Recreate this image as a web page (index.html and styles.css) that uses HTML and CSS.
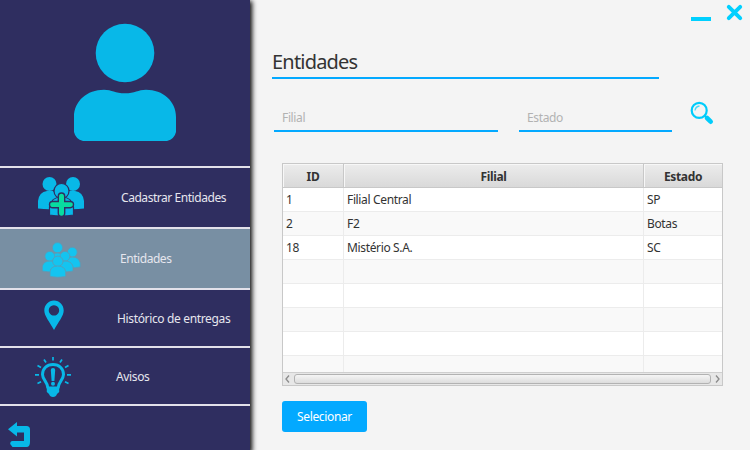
FILE: index.html
```html
<!DOCTYPE html>
<html lang="pt-BR">
<head>
<meta charset="utf-8">
<title>Entidades</title>
<link rel="stylesheet" href="styles.css">
</head>
<body>
<div class="window">
  <aside class="sidebar">
    <div class="profile">
      <svg width="104" height="120" viewBox="73 22 104 120" fill="#08b8e8"><circle cx="125" cy="53" r="29.3"/><path d="M74 117C74 101 87 89.700 104 89.700C112 89.700 115 93.300 125 93.300S138 89.700 146 89.700C163 89.700 176 101 176 117V132Q174.500 139 167 141H83Q75.500 139 74 132Z"/></svg>
    </div>
    <nav>
      <a class="item add">
        <svg width="48" height="42" viewBox="37 175 48 42" fill="#08b8e8"><circle cx="49.500" cy="184" r="7"/><circle cx="73" cy="184" r="7"/><path d="M38 208.500V201Q39 192 47 191H53L60 199V208Q52 210 38 208.500ZM84 208.500V201Q83 192 75 191H69L62 199V208Q70 210 84 208.500Z"/><g stroke="#2f2e60" stroke-width="1.200"><circle cx="61.500" cy="191" r="7.500"/><path d="M49.500 215V207Q51 197 61.500 197T73.500 207V215Q61.500 217 49.500 215Z"/><path fill="#08dca0" stroke-width="1.400" d="M58.300 201.500V196.500Q58.300 193 61.500 193T64.700 196.500V201.500H70Q73.500 201.500 73.500 204.500T70 207.800H64.700V213Q64.700 216.500 61.500 216.500T58.300 213V207.800H53Q49.500 207.800 49.500 204.500T53 201.500Z"/></g></svg>
        <span>Cadastrar Entidades</span>
      </a>
      <a class="item group active">
        <svg width="40" height="38" viewBox="41 241 40 38" fill="#14c4f0" stroke="#6298b0" stroke-width=".8"><circle cx="57.500" cy="247.700" r="5.100"/><path d="M50 266V259Q51 253 57.500 253T65.500 259V266Z"/><circle cx="72.300" cy="252.200" r="4.900"/><path d="M64.500 267V263Q66 257 72.300 257T80.300 263V267Q72 269 64.500 267Z"/><circle cx="49.800" cy="256.300" r="4.900"/><path d="M42.300 271V266Q44 261 50 261T57.500 266V271Q50 273 42.300 271Z"/><circle cx="65" cy="256.300" r="4.900"/><path d="M57.500 271V266Q59 261 65 261T73 266V271Q65 273 57.500 271Z"/><circle cx="57.800" cy="261.300" r="5.200"/><path d="M50 276.500V271.500Q51 266 57.800 266T65.700 271.500V276.500Q58 278 50 276.500Z"/></svg>
        <span>Entidades</span>
      </a>
      <a class="item history">
        <svg width="20" height="30" viewBox="44.500 299.500 20 30" fill="#08b8e8"><path fill-rule="evenodd" d="M54.500 300C49 300 44.800 304.500 44.800 310C44.800 315.500 50 321 54.500 329.500C59 321 64.200 315.500 64.200 310C64.200 304.500 60 300 54.500 300ZM54.500 304.700A5.200 5.200 0 1 1 54.400 304.700Z"/></svg>
        <span>Histórico de entregas</span>
      </a>
      <a class="item notices">
        <svg width="38" height="42" viewBox="34 356 38 42" fill="none" stroke="#08b8e8"><path stroke-width="3" d="M48 388.500C48 382 42.500 380 42.500 374.500C42.500 368.500 47 364.500 53 364.500S63.500 368.500 63.500 374.500C63.500 380 58 382 58 388.500"/><path fill="#08b8e8" stroke="none" d="M46.800 386.500H59.200V392Q58 393 57 394Q56 397 53 397T49 394Q48 393 46.800 392ZM50.800 370Q50.800 368 53 368T55.200 370L54.400 381H51.600Z"/><circle cx="53" cy="383.800" r="2" fill="#08b8e8" stroke="none"/><path stroke-width="1.700" d="M53 357V360.500M44 359.500L46 362.500M62 359.500L60 362.500M37.500 365.500L41 367.500M68.500 365.500L65 367.500M35 374.800H39M67 374.800H71M37.500 383.500L41 381.800M68.500 383.500L65 381.800"/></svg>
        <span>Avisos</span>
      </a>
    </nav>
    <div class="back">
      <svg width="24" height="26" viewBox="7 421 24 26" fill="#08b8e8"><path d="M8 429.200L17 422V426H26.500Q30 426 30 429.500V442Q30 447 26.500 447H12.500L10.200 444Q10.200 441 12.500 441H24V432.500H17V436.500Z"/></svg>
    </div>
  </aside>
  <main>
    <div class="controls">
      <svg width="56" height="18" viewBox="691 4 56 18"><path fill="#00d0ff" d="M691 17H711V21H691Z"/><path stroke="#00d0ff" stroke-width="3.900" stroke-linecap="round" d="M728.800 6.800L740.200 18.200M740.200 6.800L728.800 18.200"/></svg>
    </div>
    <h1>Entidades</h1>
    <form class="search">
      <div class="field branch">Filial</div>
      <div class="field state">Estado</div>
      <svg width="24" height="24" viewBox="690 101 24 24" fill="none"><circle cx="699.200" cy="110.400" r="7.500" stroke="#00ccfb" stroke-width="2.200"/><path stroke="#48daf8" stroke-width="1.300" d="M695 110.500Q695.500 106.500 699.500 106"/><path stroke="#00ccfb" stroke-width="2" d="M704.500 115.500L708 119"/><path stroke="#00ccfb" stroke-width="4.600" stroke-linecap="round" d="M707 118L710.700 121.700"/></svg>
    </form>
    <section class="table">
      <div class="row head"><b>ID</b><b>Filial</b><b>Estado</b></div>
      <div class="rows">
        <div class="row"><span>1</span><span>Filial Central</span><span>SP</span></div>
        <div class="row"><span>2</span><span>F2</span><span>Botas</span></div>
        <div class="row"><span>18</span><span>Mistério S.A.</span><span>SC</span></div>
        <div class="row"><span></span><span></span><span></span></div>
        <div class="row"><span></span><span></span><span></span></div>
        <div class="row"><span></span><span></span><span></span></div>
        <div class="row"><span></span><span></span><span></span></div>
        <div class="row"><span></span><span></span><span></span></div>
      </div>
      <div class="scrollbar">
        <svg width="5" height="8" viewBox="0 0 5 8"><path d="M4 .5L1 4L4 7.500" fill="none" stroke="#8b8b8b" stroke-width="1.300"/></svg>
        <div class="thumb"></div>
        <svg width="5" height="8" viewBox="0 0 5 8"><path d="M1 .5L4 4L1 7.500" fill="none" stroke="#8b8b8b" stroke-width="1.300"/></svg>
      </div>
    </section>
    <button type="button">Selecionar</button>
  </main>
</div>
</body>
</html>
```
FILE: styles.css
```css
* { box-sizing: border-box; }
body { margin: 0; font: 12px/16px "Noto Sans", sans-serif; letter-spacing: -.35px; color: #333; }
svg { display: block; flex: none; }
.window { display: flex; width: 750px; height: 450px; background: #f4f4f4; overflow: hidden; }
.sidebar { width: 250px; flex: none; background: #2f2e60; box-shadow: 1px 2px 5px 1px #000; }
.profile { height: 168px; padding: 22px 0 0 73px; border-bottom: 2px solid #e2e1ea; }
.item { display: flex; align-items: flex-start; height: 61px; border-bottom: 2px solid #e2e1ea; color: #e6e6ee; white-space: nowrap; }
.add { padding: 7px 0 0 37px; }
.add span { margin: 15px 0 0 36px; letter-spacing: -.45px; }
.group { padding: 12px 0 0 41px; }
.group span { margin: 10px 0 0 39px; letter-spacing: -.45px; }
.active { background: #788fa3; }
.history, .notices { height: 58px; }
.history { padding: 10px 0 0 44px; }
.history span { margin: 11px 0 0 53px; }
.notices { padding: 8px 0 0 34px; }
.notices span { margin: 13px 0 0 44px; }
.back { padding: 15px 0 0 7px; }
main { flex: 1; }
.controls { height: 45px; padding: 4px 0 0 441px; }
h1 { width: 387px; height: 34px; margin: 0 0 0 22px; border-bottom: 2px solid #03a9ff; font-size: 20px; line-height: 33px; font-weight: 400; letter-spacing: -.8px; }
.search { display: flex; align-items: flex-start; height: 84px; padding: 22px 0 0 24px; }
.field { height: 31px; padding: 9px 8px 0; border-bottom: 2px solid #03a9ff; color: #b2b2b2; }
.branch { width: 224px; margin-right: 21px; }
.state { width: 153px; margin-right: 18px; }
.table { width: 441px; height: 223px; margin-left: 32px; border: 1px solid #c8c8c8; background: #fff; }
.row { display: grid; grid-template-columns: 61px 300px 78px; height: 24px; }
.row > * { border-right: 1px solid #ececec; border-bottom: 1px solid #ececec; padding: 4px 0 0 3px; }
.row > :last-child { border-right: 0; }
.row:nth-child(even) { background: #f9f9f9; }
.head > b { padding: 5px 0 0; border-color: #c8c8c8; text-align: center; line-height: 16px; background: linear-gradient(#ececec, #d9d9d9); box-shadow: inset 1px 1px #f7f7f7; }
.rows { height: 184px; overflow: hidden; }
.scrollbar { display: flex; align-items: center; gap: 4px; height: 13px; padding: 0 2px; border-top: 1px solid #cfcfcf; background: #e7e7e7; }
.thumb { width: 417px; height: 10px; border: 1px solid #b2b2b2; border-radius: 3px; background: linear-gradient(#f5f5f5, #dcdcdc); }
button { display: block; width: 85px; height: 31px; margin: 15px 0 0 32px; padding: 0; border: 0; border-radius: 3px; background: #03a9ff; color: #fff; font: inherit; letter-spacing: inherit; }
```
